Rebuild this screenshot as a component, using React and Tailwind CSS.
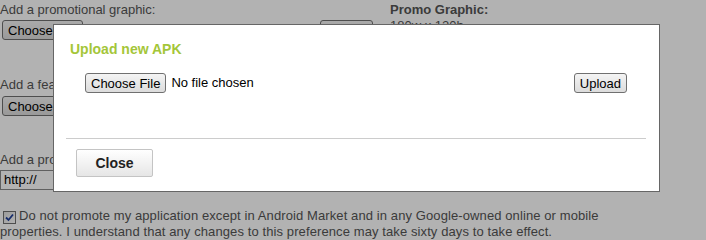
import React from 'react';

const ClassicButton = ({ children, className = '' }) => (
  <span
    className={`inline-flex h-5 items-center rounded-[3px] border border-[#707070] bg-gradient-to-b from-[#f4f4f4] to-[#dcdcdc] px-[5px] text-[13px] leading-none text-black ${className}`}
  >
    {children}
  </span>
);

const FilePicker = ({ className = '' }) => (
  <div className={`flex items-center ${className}`}>
    <ClassicButton>Choose File</ClassicButton>
    <span className="ml-[5px] text-[13px] text-black">No file chosen</span>
  </div>
);

const CheckedBox = () => (
  <span className="relative top-[2px] ml-[3px] mr-[3px] inline-flex h-[13px] w-[13px] items-center justify-center border border-[#707070] bg-gradient-to-br from-[#e0e0e0] to-white align-baseline">
    <svg width="9" height="9" viewBox="0 0 9 9">
      <path d="M1 4.5 L3.5 7 L8 1.5" fill="none" stroke="#21409a" strokeWidth="1.8" />
    </svg>
  </span>
);

export default function App() {
  return (
    <div className="relative h-[240px] w-[706px] overflow-hidden bg-white font-['Liberation_Sans',Arial,sans-serif]">
      {/* page behind the dialog */}
      <div className="text-[13px] leading-4 text-[#555]">
        <div className="flex">
          <div className="w-[373px]">
            <div className="pt-[2px]">Add a promotional graphic:</div>
            <div className="mt-[2px] flex items-center justify-between pl-[2px]">
              <FilePicker />
              <ClassicButton>Upload</ClassicButton>
            </div>
          </div>
          <div className="ml-[17px] pt-[2px]">
            <div className="font-bold">Promo Graphic:</div>
            <div>180w x 120h</div>
          </div>
        </div>

        <div className="mt-[37px]">Add a feature graphic:</div>
        <div className="mt-[3px] flex items-center pl-[2px]">
          <FilePicker />
        </div>

        <div className="mt-[36px]">Add a promotional video:</div>
        <div className="mt-[2px] flex h-5 w-[300px] items-center border border-[#8a8a8a] bg-white pl-[3px] text-[13px] text-black">
          http://
        </div>

        <p className="mt-[18px] w-[620px] text-[13px] leading-4 tracking-[0.1px]">
          <CheckedBox />
          Do not promote my application except in Android Market and in any Google-owned online or mobile
          properties. I understand that any changes to this preference may take sixty days to take effect.
        </p>
      </div>

      {/* overlay */}
      <div className="absolute inset-0 bg-black/30" />

      {/* dialog */}
      <div className="absolute left-[53px] top-[24px] w-[607px] border border-[#666] bg-white pb-[14px]">
        <h2 className="pl-[16px] pt-[15px] text-[14px] font-bold leading-[18px] text-[#a4c639]">Upload new APK</h2>
        <div className="mt-[15px] flex items-center justify-between pl-[31px] pr-[32px]">
          <FilePicker />
          <ClassicButton>Upload</ClassicButton>
        </div>
        <div className="ml-[12px] mr-[13px] mt-[45px] h-px bg-[#cccccc]" />
        <button className="ml-[22px] mt-[10px] flex h-[28px] w-[77px] items-center justify-center rounded-[2px] border border-[#c4c4c4] bg-gradient-to-b from-white to-[#e6e6e6] text-[14px] font-bold text-[#222]">
          Close
        </button>
      </div>
    </div>
  );
}
